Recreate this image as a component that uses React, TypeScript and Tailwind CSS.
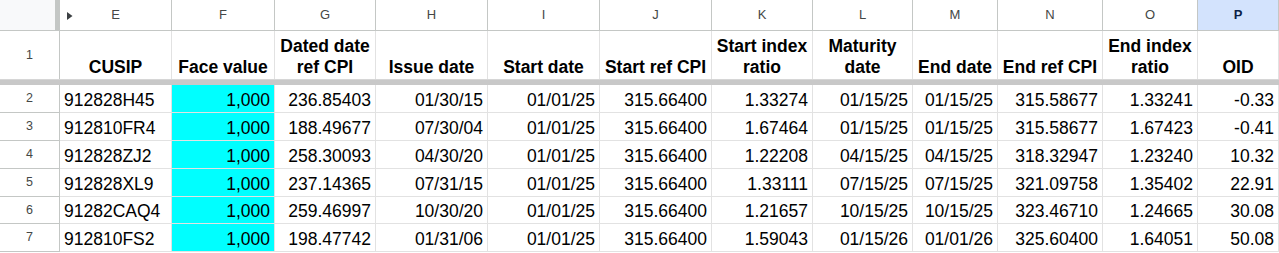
import React from "react";

const W = [
  "w-[60px]",
  "w-[112px]",
  "w-[103px]",
  "w-[101px]",
  "w-[112px]",
  "w-[112px]",
  "w-[112px]",
  "w-[101px]",
  "w-[100px]",
  "w-[85px]",
  "w-[105px]",
  "w-[95px]",
  "flex-1",
];

const letters = ["E", "F", "G", "H", "I", "J", "K", "L", "M", "N", "O", "P"];

const headers: string[][] = [
  ["CUSIP"],
  ["Face value"],
  ["Dated date", "ref CPI"],
  ["Issue date"],
  ["Start date"],
  ["Start ref CPI"],
  ["Start index", "ratio"],
  ["Maturity", "date"],
  ["End date"],
  ["End ref CPI"],
  ["End index", "ratio"],
  ["OID"],
];

const rows: string[][] = [
  ["912828H45", "1,000", "236.85403", "01/30/15", "01/01/25", "315.66400", "1.33274", "01/15/25", "01/15/25", "315.58677", "1.33241", "-0.33"],
  ["912810FR4", "1,000", "188.49677", "07/30/04", "01/01/25", "315.66400", "1.67464", "01/15/25", "01/15/25", "315.58677", "1.67423", "-0.41"],
  ["912828ZJ2", "1,000", "258.30093", "04/30/20", "01/01/25", "315.66400", "1.22208", "04/15/25", "04/15/25", "318.32947", "1.23240", "10.32"],
  ["912828XL9", "1,000", "237.14365", "07/31/15", "01/01/25", "315.66400", "1.33111", "07/15/25", "07/15/25", "321.09758", "1.35402", "22.91"],
  ["91282CAQ4", "1,000", "259.46997", "10/30/20", "01/01/25", "315.66400", "1.21657", "10/15/25", "10/15/25", "323.46710", "1.24665", "30.08"],
  ["912810FS2", "1,000", "198.47742", "01/31/06", "01/01/25", "315.66400", "1.59043", "01/15/26", "01/01/26", "325.60400", "1.64051", "50.08"],
];

const rowH = ["h-[28px]", "h-[28px]", "h-[28px]", "h-[28px]", "h-[27px]", "h-[28px]"];

export default function App() {
  return (
    <div
      className="w-[1279px] h-[253px] overflow-hidden bg-white text-black"
      style={{ fontFamily: '"Liberation Sans", Arial, sans-serif' }}
    >
      {/* column letters */}
      <div className="flex h-[31px] border-b border-[#c4c7c5]">
        <div className={`${W[0]} flex shrink-0`}>
          <div className="flex-1 bg-[#f8f9fa]" />
          <div className="w-[5px] bg-[#c4c7c5]" />
        </div>
        {letters.map((l, i) => (
          <div
            key={l}
            className={`${W[i + 1]} shrink-0 relative flex items-center justify-center border-r border-[#c4c7c5] text-[13px] ${
              l === "P" ? "bg-[#d3e3fd] font-bold text-[#0b1f47]" : "text-[#444746]"
            }`}
          >
            {l === "E" && (
              <svg className="absolute left-[7px] top-[12px]" width="6" height="8" viewBox="0 0 6 8">
                <path d="M0 0 L5.5 4 L0 8 Z" fill="#3c4043" />
              </svg>
            )}
            {l}
          </div>
        ))}
      </div>

      {/* row 1 headers */}
      <div className="flex h-[48px]">
        <div className={`${W[0]} shrink-0 flex items-center justify-center border-r border-[#c4c7c5] text-[12.5px] text-[#444746]`}>
          1
        </div>
        {headers.map((h, i) => (
          <div
            key={i}
            className={`${W[i + 1]} shrink-0 flex flex-col items-center justify-end pb-[2px] border-r border-[#e2e2e2] font-bold text-[17.5px] leading-[20.5px] whitespace-nowrap`}
          >
            {h.map((t) => (
              <span key={t}>{t}</span>
            ))}
          </div>
        ))}
      </div>

      {/* freeze band */}
      <div className="h-[6px] bg-[#c8c8c8] border-t border-[#d6d6d6]" />

      {rows.map((r, ri) => (
        <div key={ri} className={`flex ${rowH[ri]}`}>
          <div
            className={`${W[0]} shrink-0 flex items-center justify-center border-r border-b border-[#c4c7c5] text-[12.5px] text-[#444746]`}
          >
            {ri + 2}
          </div>
          {r.map((v, ci) => (
            <div
              key={ci}
              className={`${W[ci + 1]} shrink-0 flex items-end pb-[2px] border-r border-b border-[#e2e2e2] text-[17.5px] leading-[20.5px] whitespace-nowrap ${
                ci === 0 ? "justify-start pl-[4px]" : "justify-end pr-[4px]"
              } ${ci === 1 ? "bg-[#00ffff]" : ""}`}
            >
              {v}
            </div>
          ))}
        </div>
      ))}
    </div>
  );
}
